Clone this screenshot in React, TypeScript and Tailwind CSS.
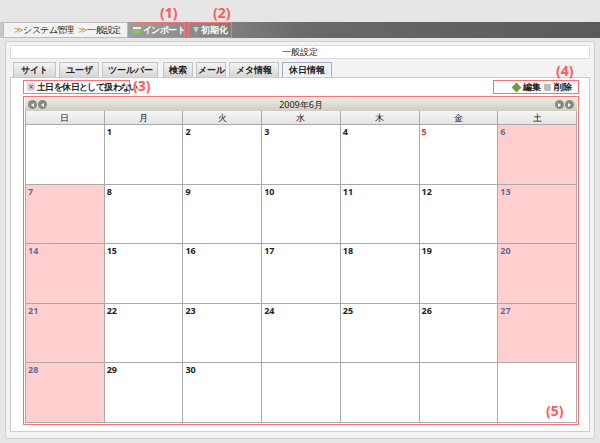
const tabs = ['サイト', 'ユーザ', 'ツールバー', '検索', 'メール', 'メタ情報', '休日情報'];
const tabW = ['w-[43px]', 'w-[40px]', 'w-[56px]', 'w-[30px]', 'w-[30px]', 'w-[50px]', 'w-[50px]'];
const days = ['日', '月', '火', '水', '木', '金', '土'];

const weeks: (number | null)[][] = [
  [null, 1, 2, 3, 4, 5, 6],
  [7, 8, 9, 10, 11, 12, 13],
  [14, 15, 16, 17, 18, 19, 20],
  [21, 22, 23, 24, 25, 26, 27],
  [28, 29, 30, null, null, null, null],
];

function Label({ text, className }: { text: string; className: string }) {
  return <span className={`absolute text-[14px] font-bold text-[#ff5a5a] ${className}`}>{text}</span>;
}

function NavBtn({ dir }: { dir: 'l' | 'r' }) {
  return (
    <span className="w-[9px] h-[9px] rounded-full bg-[#8a8a80] flex items-center justify-center">
      <span className={`w-0 h-0 border-y-[2.5px] border-y-transparent ${dir === 'l' ? 'border-r-[3px] border-r-white' : 'border-l-[3px] border-l-white'}`} />
    </span>
  );
}

export default function App() {
  return (
    <div className="relative w-[600px] h-[443px] bg-[#e6e6e6] font-['Liberation_Sans','Noto_Sans_CJK_JP',sans-serif] text-[9px] text-[#222] overflow-hidden whitespace-nowrap">
      <Label text="(1)" className="left-[160px] top-[2px]" />
      <Label text="(2)" className="left-[213px] top-[2px]" />
      <Label text="(3)" className="left-[133px] top-[75px]" />
      <Label text="(4)" className="left-[556px] top-[60px]" />
      <Label text="(5)" className="left-[546px] top-[400px]" />

      <div className="pt-[22px]">
        <div className="h-[16px] flex items-stretch bg-gradient-to-r from-[#c8c8c8] via-[#6a6a6a] to-[#5a5a5a]">
          <div className="ml-[3px] w-[125px] bg-[#f2f2f2] border border-[#bbb] flex items-center gap-[1px] pl-[10px] tracking-[-0.6px]">
            <span className="text-[#c8a040]">≫</span>システム管理<span className="ml-[3px] text-[#c8a040]">≫</span>一般設定
          </div>
          <div className="ml-[5px] w-[52px] border border-[#ff7070] flex items-center justify-center gap-[2px] text-white font-bold tracking-[-0.6px]">
            <span className="w-[8px] h-[7px] shrink-0 bg-[#8cc060] border-t-2 border-t-[#eee]" />インポート
          </div>
          <div className="ml-[3px] w-[44px] border border-[#ff7070] flex items-center justify-center gap-[2px] text-white font-bold">
            <span className="w-0 h-0 border-x-[3px] border-x-transparent border-t-[6px] border-t-[#ccc]" />初期化
          </div>
        </div>
      </div>

      <div className="mx-[5px] mt-[3px] h-[398px] bg-[#f3f3f3] border border-[#cfcfcf] rounded-[3px] px-[4px] pt-[3px]">
        <div className="h-[14px] bg-white border border-[#ddd] flex items-center justify-center">一般設定</div>
        <div className="mt-[3px] flex items-end gap-[3px] pl-[3px] h-[16px] border-b border-[#ccc]">
          {tabs.map((t, i) => (
            <div
              key={t}
              className={`${tabW[i]} h-[15px] flex items-center justify-center font-bold border border-b-0 ${
                i === 6 ? 'bg-[#eef4fa] border-[#aac]' : 'bg-gradient-to-b from-[#f4f4f4] to-[#d6d6d6] border-[#c4c4c4]'
              } ${i === 3 ? 'ml-[2px]' : ''}`}
            >
              {t}
            </div>
          ))}
        </div>
        <div className="h-[354px] bg-white border border-t-0 border-[#ccc] px-[12px] pt-[2px]">
          <div className="flex justify-between h-[14px]">
            <div className="w-[107px] border border-[#ff7070] flex items-center gap-[2px] pl-[3px] font-bold tracking-[-0.6px]">
              <span className="w-[8px] h-[8px] shrink-0 bg-[#d0d8e0] text-[#e03030] text-[8px] leading-[8px] text-center">×</span>
              土日を休日として扱わない
            </div>
            <div className="w-[86px] -mr-[2px] border border-[#ff7070] flex items-center justify-end gap-[3px] pr-[6px] font-bold">
              <span className="w-[7px] h-[7px] bg-[#6aa040] rotate-45" />編集
              <span className="w-[7px] h-[7px] bg-[#bbb] rounded-b-[2px]" />削除
            </div>
          </div>
          <div className="mt-[2px] w-[556px] border border-[#ff7070] p-[1px]">
            <div className="h-[13px] bg-gradient-to-b from-[#ecebe3] to-[#cfcdc3] flex items-center justify-between px-[3px]">
              <div className="flex gap-[1px]"><NavBtn dir="l" /><NavBtn dir="l" /></div>
              <span>2009年6月</span>
              <div className="flex gap-[1px]"><NavBtn dir="r" /><NavBtn dir="r" /></div>
            </div>
            <div className="grid grid-cols-7 border-l border-[#aaa]">
              {days.map((d) => (
                <div key={d} className="h-[14px] bg-gradient-to-b from-[#f6f6f6] to-[#e4e4e4] border-r border-b border-[#aaa] flex items-center justify-center">{d}</div>
              ))}
              {weeks.flat().map((n, i) => {
                const col = i % 7;
                const holiday = n !== null && (col === 0 || col === 6);
                return (
                  <div key={i} className={`h-[59.6px] border-r border-b border-[#aaa] pl-[2px] font-bold ${holiday ? 'bg-[#ffcfcf] text-[#5a6ea0]' : 'bg-white'} ${n === 5 ? 'text-[#e03030]' : ''}`}>
                    {n}
                  </div>
                );
              })}
            </div>
          </div>
        </div>
      </div>
    </div>
  );
}
